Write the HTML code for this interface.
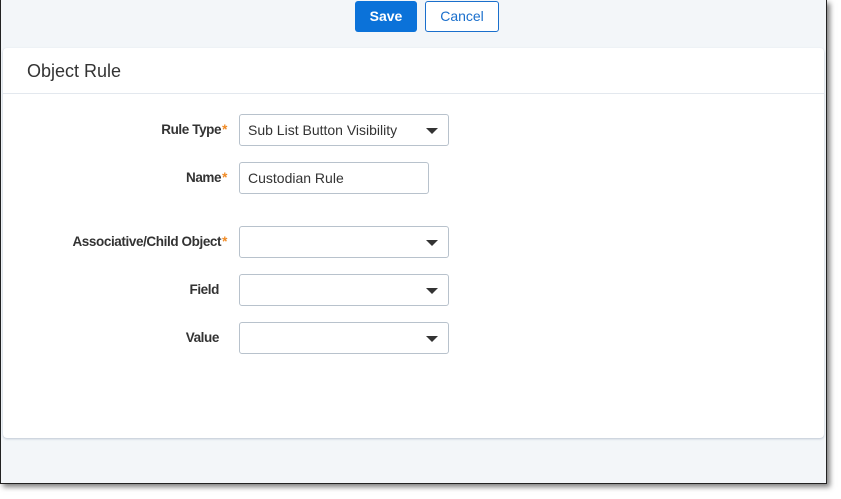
<!DOCTYPE html>
<html><head><style>
body{margin:0;width:841px;height:499px;background:#fff;font-family:"Liberation Sans",sans-serif;position:relative;overflow:hidden}
.frame{position:absolute;left:0;top:0;width:825px;height:483px;background:#f3f6f9;border-left:1px solid #222;border-right:1px solid #222;border-bottom:1px solid #222;box-shadow:3px 3px 5px rgba(0,0,0,.5)}
.btn{position:absolute;top:1px;height:31px;border-radius:3px;font-size:14px;line-height:31px;text-align:center;box-sizing:border-box}
.save{left:354px;width:62px;background:#0b72d9;color:#fff;font-weight:bold}
.cancel{left:424px;width:74px;border:1px solid #1a6fcc;background:#fff;color:#1a6fcc;line-height:29px}
.panel{position:absolute;left:2px;top:48px;width:821px;height:390px;background:#fff;border-radius:4px;box-shadow:0 1px 2px rgba(90,110,140,.35)}
.title{position:absolute;left:24px;top:13px;font-size:18px;color:#333}
.hr{position:absolute;left:0;right:0;top:45px;border-top:1px solid #e3e8ee}
.lbl{position:absolute;right:597px;font-size:13.5px;letter-spacing:-0.4px;font-weight:bold;color:#333;text-align:right;white-space:nowrap}
.lbl span{color:#f08a24;margin-left:1px}
.in{position:absolute;left:236px;width:210px;height:32px;border:1px solid #b8c2cc;border-radius:3px;box-sizing:border-box;font-size:14px;color:#333;padding-left:8px;line-height:30px}
.in i{position:absolute;right:10px;top:13px;border-left:6px solid transparent;border-right:6px solid transparent;border-top:6px solid #333}
</style></head><body>
<div class="frame">
<div class="btn save">Save</div>
<div class="btn cancel">Cancel</div>
<div class="panel">
<div class="title">Object Rule</div>
<div class="hr"></div>
<div class="lbl" style="top:74px">Rule Type<span>*</span></div>
<div class="in" style="top:66px">Sub List Button Visibility<i></i></div>
<div class="lbl" style="top:122px">Name<span>*</span></div>
<div class="in" style="top:114px;width:190px">Custodian Rule</div>
<div class="lbl" style="top:186px">Associative/Child Object<span>*</span></div>
<div class="in" style="top:178px"><i></i></div>
<div class="lbl" style="top:234px;right:605px">Field</div>
<div class="in" style="top:226px"><i></i></div>
<div class="lbl" style="top:282px;right:605px">Value</div>
<div class="in" style="top:274px"><i></i></div>
</div>
</div>
</body></html>
